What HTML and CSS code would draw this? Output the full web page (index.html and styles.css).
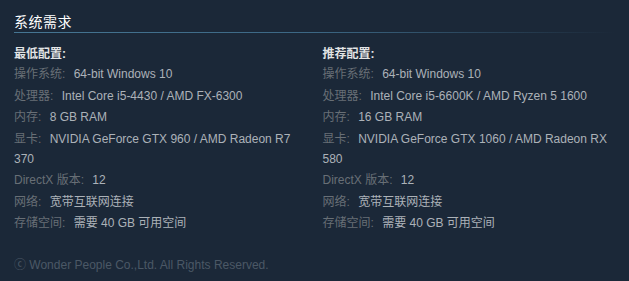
FILE: index.html
```html
<!DOCTYPE html>
<html lang="zh-CN">
<head>
<meta charset="utf-8">
<title>系统需求</title>
<link rel="stylesheet" href="styles.css">
</head>
<body>
<div class="page">
  <h2 class="title">系统需求</h2>
  <div class="cols">
    <ul class="req">
      <li class="req-head">最低配置:</li>
      <li><span class="lbl">操作系统:</span> 64-bit Windows 10</li>
      <li><span class="lbl">处理器:</span> Intel Core i5-4430 / AMD FX-6300</li>
      <li><span class="lbl">内存:</span> 8 GB RAM</li>
      <li><span class="lbl">显卡:</span> NVIDIA GeForce GTX 960 / AMD Radeon R7 370</li>
      <li><span class="lbl">DirectX 版本:</span> 12</li>
      <li><span class="lbl">网络:</span> 宽带互联网连接</li>
      <li><span class="lbl">存储空间:</span> 需要 40 GB 可用空间</li>
    </ul>
    <ul class="req">
      <li class="req-head">推荐配置:</li>
      <li><span class="lbl">操作系统:</span> 64-bit Windows 10</li>
      <li><span class="lbl">处理器:</span> Intel Core i5-6600K / AMD Ryzen 5 1600</li>
      <li><span class="lbl">内存:</span> 16 GB RAM</li>
      <li><span class="lbl">显卡:</span> NVIDIA GeForce GTX 1060 / AMD Radeon RX 580</li>
      <li><span class="lbl">DirectX 版本:</span> 12</li>
      <li><span class="lbl">网络:</span> 宽带互联网连接</li>
      <li><span class="lbl">存储空间:</span> 需要 40 GB 可用空间</li>
    </ul>
  </div>
  <p class="legal">ⓒ Wonder People Co.,Ltd. All Rights Reserved.</p>
</div>
</body>
</html>
```
FILE: styles.css
```css
html, body {
  margin: 0;
  padding: 0;
  background: #1b2838;
}
body {
  font-family: "Liberation Sans", Arial, "Noto Sans CJK SC", sans-serif;
  font-size: 12px;
  color: #acb2b8;
}
.page {
  padding: 12px 14px 0 14px;
}
.title {
  margin: 0;
  font-size: 14px;
  font-weight: normal;
  line-height: 20px;
  letter-spacing: 0.5px;
  color: #ffffff;
  padding-bottom: 2px;
}
.title::after {
  content: "";
  display: block;
  height: 1px;
  background: linear-gradient(to right, #467693 0%, #3c6784 50%, rgba(40, 70, 95, 0) 100%);
}
.cols {
  display: grid;
  grid-template-columns: 1fr 1fr;
  column-gap: 16px;
  margin-top: 9px;
}
.req {
  list-style: none;
  margin: 0;
  padding: 0;
}
.req li {
  line-height: 20px;
  margin-bottom: 1.5px;
}
.req li.req-head {
  margin-bottom: 0;
  color: #e2e4e5;
  font-weight: bold;
}
.lbl {
  color: #686f76;
  margin-right: 5px;
}
.legal {
  margin: 22px 0 0 0;
  line-height: 16px;
  color: #4b5866;
  font-family: "Liberation Sans", Arial, "DejaVu Sans", sans-serif;
}
```
